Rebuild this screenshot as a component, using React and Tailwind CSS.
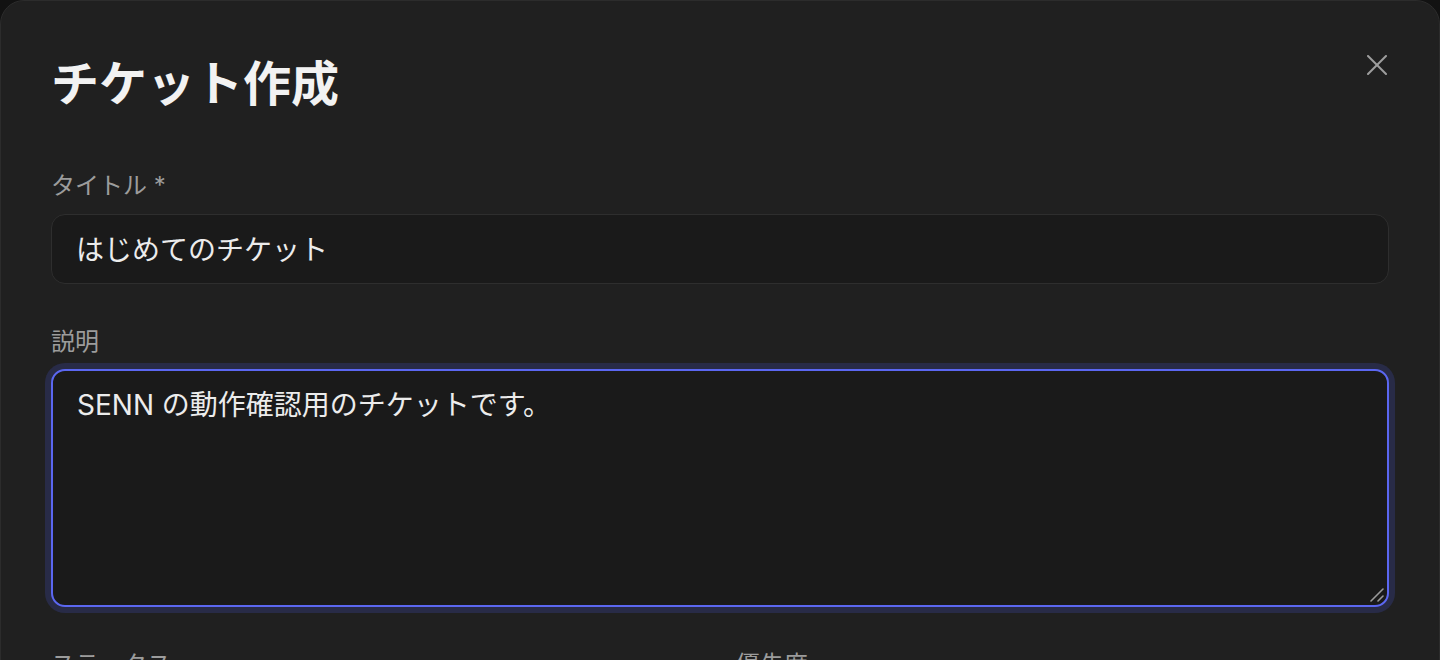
import React from "react";

export default function App() {
  const font = { fontFamily: 'Inter, "Noto Sans CJK JP", "Noto Sans", sans-serif' };
  return (
    <div className="h-[660px] w-[1440px] overflow-hidden bg-[#121212]" style={font}>
      <div className="relative h-[760px] rounded-t-[24px] border border-[#2c2c2c] bg-[#202020] px-[50px] pt-[55px]">
        <button className="absolute right-[52px] top-[54px] flex h-[20px] w-[20px] items-center justify-center text-[#9e9e9e]">
          <svg width="20" height="20" viewBox="0 0 20 20" fill="none" stroke="currentColor" strokeWidth="2" strokeLinecap="round">
            <path d="M1 1 L19 19" />
            <path d="M19 1 L1 19" />
          </svg>
        </button>
        <h1 className="text-[48px] font-bold leading-[56px] text-[#f2f2f2]">チケット作成</h1>

        <div className="mt-[58px]">
          <label className="block text-[24px] leading-[32px] text-[#9c9c9c]">タイトル *</label>
          <input
            className="mt-[12px] block h-[70px] w-full rounded-[14px] border border-[#2e2e2e] bg-[#1a1a1a] px-6 pb-[3px] text-[28px] text-[#ececec] outline-none"
            defaultValue="はじめてのチケット"
          />
        </div>

        <div className="mt-[42px]">
          <label className="block text-[24px] leading-[32px] text-[#9c9c9c]">説明</label>
          <div className="relative mt-[11px]">
            <textarea
              className="block h-[238px] w-full resize-none rounded-[14px] border-2 border-[#5b67f1] bg-[#1a1a1a] px-6 pt-[14px] text-[28px] leading-[40px] text-[#ececec] outline-none ring-[6px] ring-[#282b47]"
              defaultValue="SENN の動作確認用のチケットです。"
            />
            <svg
              className="pointer-events-none absolute bottom-[5px] right-[5px]"
              width="14"
              height="14"
              viewBox="0 0 14 14"
              fill="none"
              stroke="#9a9a9a"
              strokeWidth="1.6"
              strokeLinecap="round"
            >
              <path d="M1 13 L13 1" />
              <path d="M8 13 L13 8" />
            </svg>
          </div>
        </div>

        <div className="mt-[42px] grid grid-cols-2 gap-8">
          <label className="block text-[24px] leading-[32px] text-[#9c9c9c]">ステータス</label>
          <label className="block text-[24px] leading-[32px] text-[#9c9c9c]">優先度</label>
        </div>
      </div>
    </div>
  );
}
